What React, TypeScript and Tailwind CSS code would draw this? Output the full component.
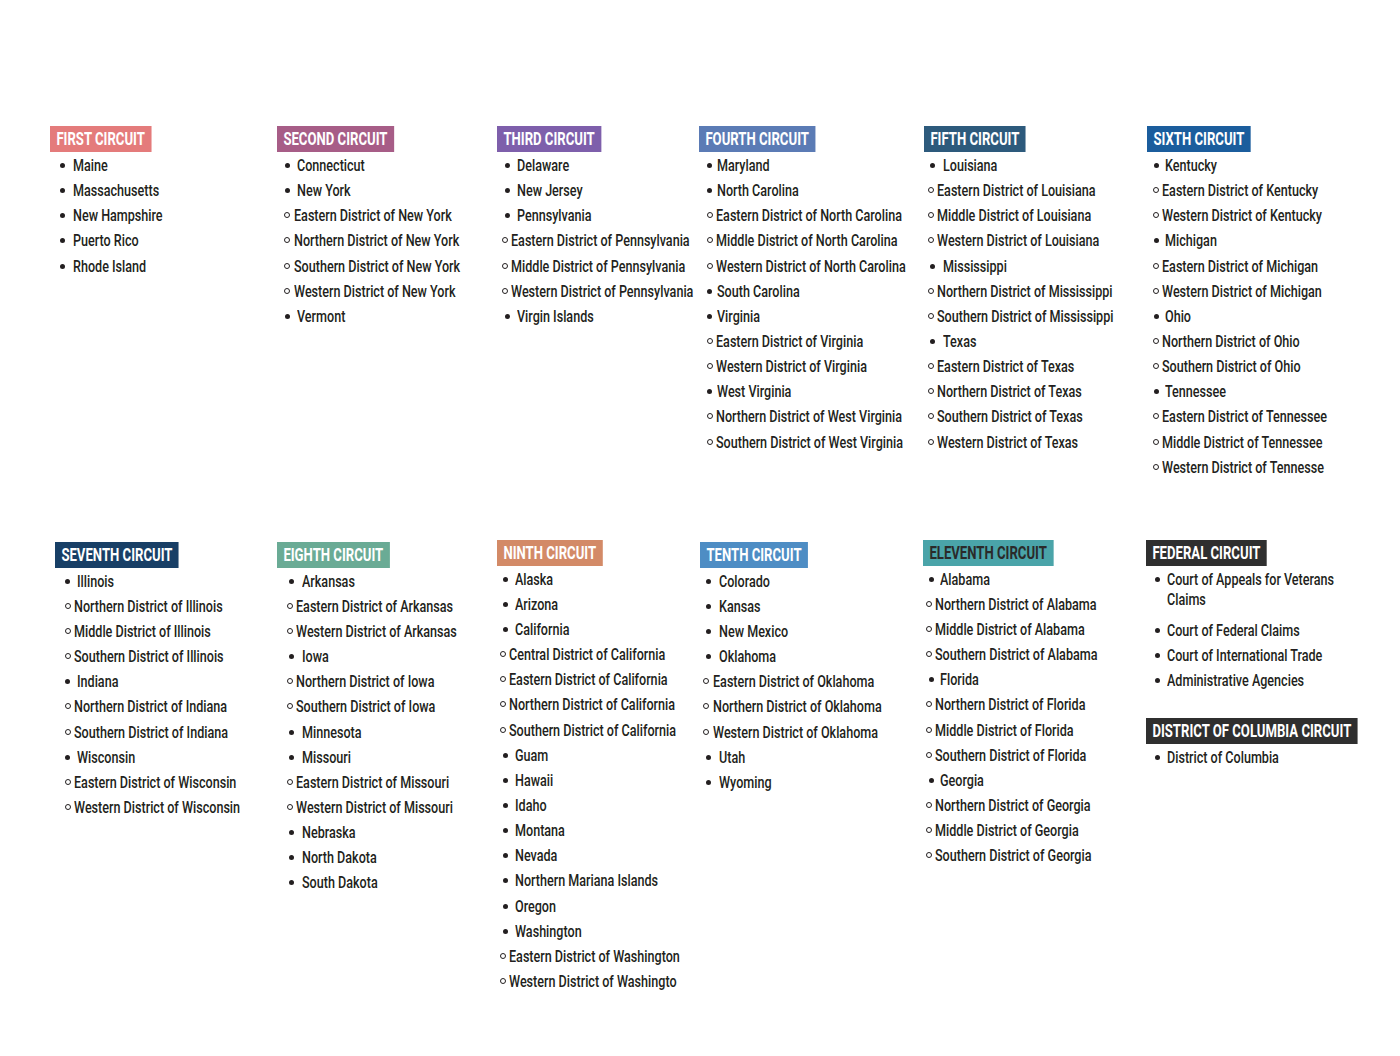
import React from "react";

type Item = [kind: "s" | "d", text: string];

type Circuit = {
  title: string;
  bg: string;
  fg?: string;
  dot: number;
  dotText: number;
  circ: number;
  circText: number;
  items: Item[];
  shift?: string;
};

const SX = "origin-left scale-x-[0.74]";

const row1: Circuit[] = [
  {
    title: "FIRST CIRCUIT",
    bg: "bg-[#e47b7b]",
    dot: 12,
    dotText: 23,
    circ: 12,
    circText: 18,
    items: [
      ["s", "Maine"],
      ["s", "Massachusetts"],
      ["s", "New Hampshire"],
      ["s", "Puerto Rico"],
      ["s", "Rhode Island"],
    ],
  },
  {
    title: "SECOND CIRCUIT",
    bg: "bg-[#a75d87]",
    dot: 10,
    dotText: 20,
    circ: 10,
    circText: 17,
    items: [
      ["s", "Connecticut"],
      ["s", "New York"],
      ["d", "Eastern District of New York"],
      ["d", "Northern District of New York"],
      ["d", "Southern District of New York"],
      ["d", "Western District of New York"],
      ["s", "Vermont"],
    ],
  },
  {
    title: "THIRD CIRCUIT",
    bg: "bg-[#7e5fab]",
    dot: 10,
    dotText: 20,
    circ: 8,
    circText: 14,
    items: [
      ["s", "Delaware"],
      ["s", "New Jersey"],
      ["s", "Pennsylvania"],
      ["d", "Eastern District of Pennsylvania"],
      ["d", "Middle District of Pennsylvania"],
      ["d", "Western District of Pennsylvania"],
      ["s", "Virgin Islands"],
    ],
  },
  {
    title: "FOURTH CIRCUIT",
    bg: "bg-[#5b7bb5]",
    dot: 10,
    dotText: 18,
    circ: 11,
    circText: 17,
    items: [
      ["s", "Maryland"],
      ["s", "North Carolina"],
      ["d", "Eastern District of North Carolina"],
      ["d", "Middle District of North Carolina"],
      ["d", "Western District of North Carolina"],
      ["s", "South Carolina"],
      ["s", "Virginia"],
      ["d", "Eastern District of Virginia"],
      ["d", "Western District of Virginia"],
      ["s", "West Virginia"],
      ["d", "Northern District of West Virginia"],
      ["d", "Southern District of West Virginia"],
    ],
  },
  {
    title: "FIFTH CIRCUIT",
    bg: "bg-[#2d5a7c]",
    dot: 8,
    dotText: 19,
    circ: 7,
    circText: 13,
    items: [
      ["s", "Louisiana"],
      ["d", "Eastern District of Louisiana"],
      ["d", "Middle District of Louisiana"],
      ["d", "Western District of Louisiana"],
      ["s", "Mississippi"],
      ["d", "Northern District of Mississippi"],
      ["d", "Southern District of Mississippi"],
      ["s", "Texas"],
      ["d", "Eastern District of Texas"],
      ["d", "Northern District of Texas"],
      ["d", "Southern District of Texas"],
      ["d", "Western District of Texas"],
    ],
  },
  {
    title: "SIXTH CIRCUIT",
    bg: "bg-[#1b5d9d]",
    dot: 9,
    dotText: 18,
    circ: 9,
    circText: 15,
    items: [
      ["s", "Kentucky"],
      ["d", "Eastern District of Kentucky"],
      ["d", "Western District of Kentucky"],
      ["s", "Michigan"],
      ["d", "Eastern District of Michigan"],
      ["d", "Western District of Michigan"],
      ["s", "Ohio"],
      ["d", "Northern District of Ohio"],
      ["d", "Southern District of Ohio"],
      ["s", "Tennessee"],
      ["d", "Eastern District of Tennessee"],
      ["d", "Middle District of Tennessee"],
      ["d", "Western District of Tennesse"],
    ],
  },
];

const row2: Circuit[] = [
  {
    title: "SEVENTH CIRCUIT",
    bg: "bg-[#183f66]",
    dot: 12,
    dotText: 22,
    circ: 13,
    circText: 19,
    shift: "ml-[5px]",
    items: [
      ["s", "Illinois"],
      ["d", "Northern District of Illinois"],
      ["d", "Middle District of Illinois"],
      ["d", "Southern District of Illinois"],
      ["s", "Indiana"],
      ["d", "Northern District of Indiana"],
      ["d", "Southern District of Indiana"],
      ["s", "Wisconsin"],
      ["d", "Eastern District of Wisconsin"],
      ["d", "Western District of Wisconsin"],
    ],
  },
  {
    title: "EIGHTH CIRCUIT",
    bg: "bg-[#6aab95]",
    dot: 14,
    dotText: 25,
    circ: 13,
    circText: 19,
    items: [
      ["s", "Arkansas"],
      ["d", "Eastern District of Arkansas"],
      ["d", "Western District of Arkansas"],
      ["s", "Iowa"],
      ["d", "Northern District of Iowa"],
      ["d", "Southern District of Iowa"],
      ["s", "Minnesota"],
      ["s", "Missouri"],
      ["d", "Eastern District of Missouri"],
      ["d", "Western District of Missouri"],
      ["s", "Nebraska"],
      ["s", "North Dakota"],
      ["s", "South Dakota"],
    ],
  },
  {
    title: "NINTH CIRCUIT",
    bg: "bg-[#d38a67]",
    dot: 8,
    dotText: 18,
    circ: 6,
    circText: 12,
    shift: "-mt-[2px]",
    items: [
      ["s", "Alaska"],
      ["s", "Arizona"],
      ["s", "California"],
      ["d", "Central District of California"],
      ["d", "Eastern District of California"],
      ["d", "Northern District of California"],
      ["d", "Southern District of California"],
      ["s", "Guam"],
      ["s", "Hawaii"],
      ["s", "Idaho"],
      ["s", "Montana"],
      ["s", "Nevada"],
      ["s", "Northern Mariana Islands"],
      ["s", "Oregon"],
      ["s", "Washington"],
      ["d", "Eastern District of Washington"],
      ["d", "Western District of Washingto"],
    ],
  },
  {
    title: "TENTH CIRCUIT",
    bg: "bg-[#4e8dc4]",
    dot: 8,
    dotText: 19,
    circ: 6,
    circText: 13,
    items: [
      ["s", "Colorado"],
      ["s", "Kansas"],
      ["s", "New Mexico"],
      ["s", "Oklahoma"],
      ["d", "Eastern District of Oklahoma"],
      ["d", "Northern District of Oklahoma"],
      ["d", "Western District of Oklahoma"],
      ["s", "Utah"],
      ["s", "Wyoming"],
    ],
  },
  {
    title: "ELEVENTH CIRCUIT",
    bg: "bg-[#4aa4a9]",
    fg: "text-[#2a2a2a]",
    dot: 8,
    dotText: 17,
    circ: 6,
    circText: 12,
    shift: "-mt-[2px]",
    items: [
      ["s", "Alabama"],
      ["d", "Northern District of Alabama"],
      ["d", "Middle District of Alabama"],
      ["d", "Southern District of Alabama"],
      ["s", "Florida"],
      ["d", "Northern District of Florida"],
      ["d", "Middle District of Florida"],
      ["d", "Southern District of Florida"],
      ["s", "Georgia"],
      ["d", "Northern District of Georgia"],
      ["d", "Middle District of Georgia"],
      ["d", "Southern District of Georgia"],
    ],
  },
];

function Header({ title, bg, fg }: { title: string; bg: string; fg?: string }) {
  return (
    <div className={`inline-flex h-[26px] origin-left scale-x-[0.71] items-center whitespace-nowrap px-[9px] text-[18.5px] font-bold ${bg} ${fg ?? "text-white"}`}>
      {title}
    </div>
  );
}

function Entry({ c, item }: { c: Circuit; item: Item }) {
  const [kind, text] = item;
  if (kind === "s") {
    return (
      <li className="flex items-start">
        <span className="mt-[8px] h-[5px] w-[5px] shrink-0 rounded-full bg-[#231f20]" style={{ marginLeft: c.dot - 2.5 }} />
        <span className={`inline-block whitespace-nowrap ${SX}`} style={{ marginLeft: c.dotText - (c.dot + 2.5) }}>
          {text}
        </span>
      </li>
    );
  }
  return (
    <li className="flex items-start">
      <span className="mt-[7px] h-[6px] w-[6px] shrink-0 rounded-full border border-[#231f20]" style={{ marginLeft: c.circ - 3 }} />
      <span className={`inline-block whitespace-nowrap ${SX}`} style={{ marginLeft: c.circText - (c.circ + 3) }}>
        {text}
      </span>
    </li>
  );
}

function Column({ c }: { c: Circuit }) {
  return (
    <div className={c.shift ?? ""}>
      <Header title={c.title} bg={c.bg} fg={c.fg} />
      <ul className="mt-[3px] flex flex-col gap-[5.15px]">
        {c.items.map((it) => (
          <Entry key={it[1]} c={c} item={it} />
        ))}
      </ul>
    </div>
  );
}

const federal: Circuit = {
  title: "FEDERAL CIRCUIT",
  bg: "bg-[#2f2f2f]",
  dot: 11,
  dotText: 21,
  circ: 11,
  circText: 17,
  items: [
    ["s", "Court of Federal Claims"],
    ["s", "Court of International Trade"],
    ["s", "Administrative Agencies"],
  ],
};

function FederalColumn() {
  const c = federal;
  return (
    <div className="-mt-[2px]">
      <Header title={c.title} bg={c.bg} />
      <ul className="mt-[3px] flex flex-col gap-[5.15px]">
        <li className="mb-[6px] flex items-start">
          <span className="mt-[8px] h-[5px] w-[5px] shrink-0 rounded-full bg-[#231f20]" style={{ marginLeft: c.dot - 2.5 }} />
          <span className={`inline-block whitespace-nowrap ${SX}`} style={{ marginLeft: c.dotText - (c.dot + 2.5) }}>
            Court of Appeals for Veterans
            <br />
            Claims
          </span>
        </li>
        {c.items.map((it) => (
          <Entry key={it[1]} c={c} item={it} />
        ))}
      </ul>
      <div className="mt-[28px]">
        <Header title="DISTRICT OF COLUMBIA CIRCUIT" bg="bg-[#2f2f2f]" />
        <ul className="mt-[3px] flex flex-col">
          <Entry c={c} item={["s", "District of Columbia"]} />
        </ul>
      </div>
    </div>
  );
}

export default function App() {
  return (
    <div className="h-[1056px] w-[1400px] overflow-hidden bg-white pl-[50px] pt-[126px] font-['Roboto','Liberation_Sans',sans-serif] text-[17px] font-medium leading-[20px] text-[#231f20]">
      <div className="grid grid-cols-[227px_220px_202px_225px_223px_200px]">
        {row1.map((c) => (
          <Column key={c.title} c={c} />
        ))}
      </div>
      <div className="mt-[65px] grid grid-cols-[227px_220px_203px_223px_223px_200px]">
        {row2.map((c) => (
          <Column key={c.title} c={c} />
        ))}
        <FederalColumn />
      </div>
    </div>
  );
}
